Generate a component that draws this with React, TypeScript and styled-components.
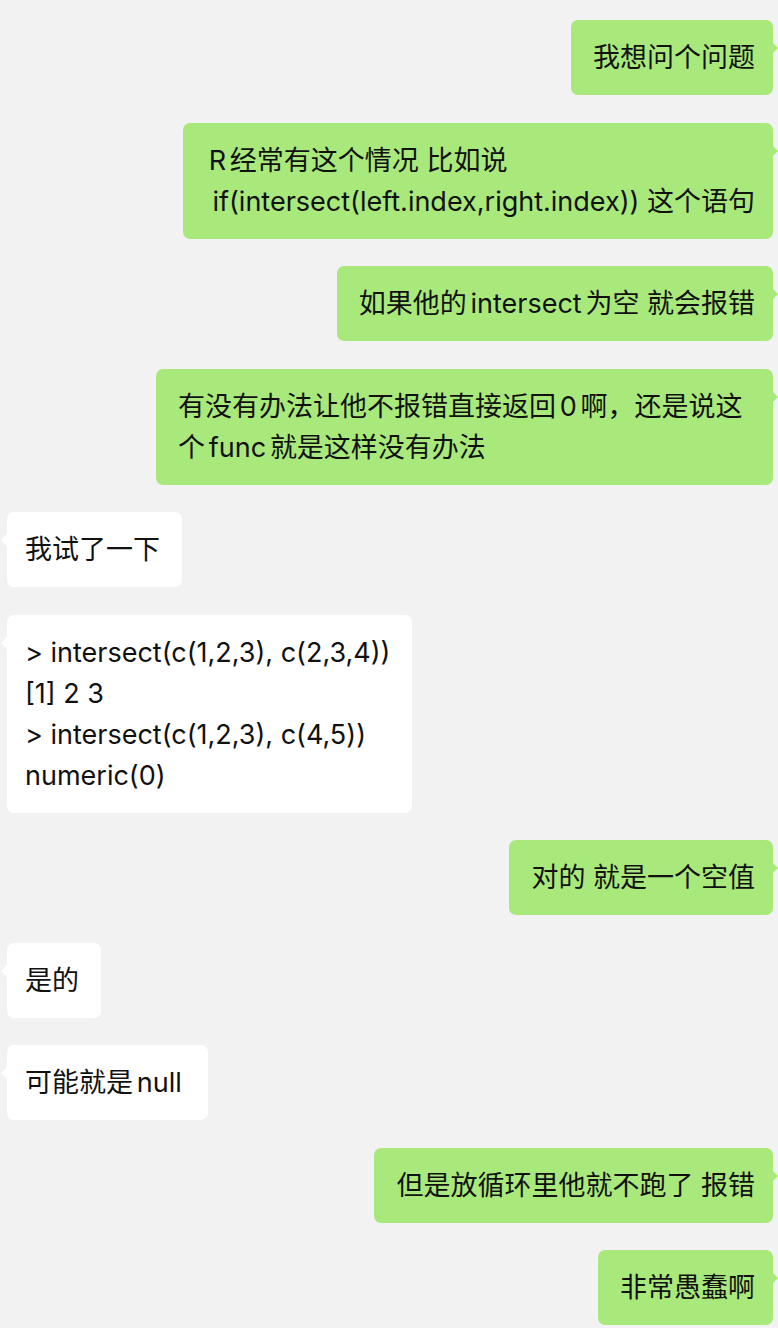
import React from 'react'
import { styled, createGlobalStyle } from 'styled-components'

type Side = 'left' | 'right'

type Message = {
  id: number
  side: Side
  text: string
}

const messages: Message[] = [
  { id: 1, side: 'right', text: '我想问个问题' },
  { id: 2, side: 'right', text: 'R经常有这个情况 比如说\n if(intersect(left.index,right.index)) 这个语句' },
  { id: 3, side: 'right', text: '如果他的intersect为空 就会报错' },
  { id: 4, side: 'right', text: '有没有办法让他不报错直接返回0啊，还是说这个func就是这样没有办法' },
  { id: 5, side: 'left', text: '我试了一下' },
  {
    id: 6,
    side: 'left',
    text: '> intersect(c(1,2,3), c(2,3,4))\n[1] 2 3\n> intersect(c(1,2,3), c(4,5))\nnumeric(0)',
  },
  { id: 7, side: 'right', text: '对的 就是一个空值' },
  { id: 8, side: 'left', text: '是的' },
  { id: 9, side: 'left', text: '可能就是null' },
  { id: 10, side: 'right', text: '但是放循环里他就不跑了 报错' },
  { id: 11, side: 'right', text: '非常愚蠢啊' },
]

const CJK = /([\u3000-\u303f\u4e00-\u9fff\uff00-\uffef]+)/

// macOS puts a little air between Chinese and Latin runs, mimic that
const renderText = (text: string) => {
  if (!CJK.test(text)) return text
  return text.split(CJK).map((part, i) => {
    if (!part) return null
    if (CJK.test(part) || !/\S/.test(part)) return <React.Fragment key={i}>{part}</React.Fragment>
    return (
      <Latin key={i} $left={!/^\s/.test(part)} $right={!/\s$/.test(part)}>
        {part}
      </Latin>
    )
  })
}

const App: React.FC = () => {
  return (
    <>
      <GlobalStyle />
      <Chat>
        {messages.map((m) => (
          <Row key={m.id} $side={m.side}>
            <Bubble $side={m.side}>{renderText(m.text)}</Bubble>
          </Row>
        ))}
      </Chat>
    </>
  )
}

const GlobalStyle = createGlobalStyle`
  html, body {
    margin: 0;
    padding: 0;
    background: #f2f2f2;
  }

  body {
    font-family: Inter, "Noto Sans CJK SC", "Noto Sans", sans-serif;
    -webkit-font-smoothing: antialiased;
  }
`

const Chat = styled.div`
  display: flex;
  flex-direction: column;
  gap: 27.5px;
  padding: 20px 5px 20px 7px;
  box-sizing: border-box;
  width: 778px;
  min-height: 1328px;
`

const Row = styled.div<{ $side: Side }>`
  display: flex;
  justify-content: ${(p) => (p.$side === 'right' ? 'flex-end' : 'flex-start')};
`

const Bubble = styled.div<{ $side: Side }>`
  position: relative;
  max-width: 617px;
  box-sizing: border-box;
  padding: ${(p) => (p.$side === 'right' ? '17px 18px 17px 22px' : '17px 22px 17px 18px')};
  border-radius: 7px;
  background: ${(p) => (p.$side === 'right' ? '#a9e97c' : '#ffffff')};
  color: #111111;
  font-size: 27px;
  line-height: 41px;
  white-space: pre-wrap;
  word-break: break-word;

  &::after {
    content: '';
    position: absolute;
    top: 22px;
    ${(p) => (p.$side === 'right' ? 'right: -5px;' : 'left: -6px;')}
    border-top: 6px solid transparent;
    border-bottom: 6px solid transparent;
    ${(p) =>
      p.$side === 'right'
        ? 'border-left: 6px solid #a9e97c;'
        : 'border-right: 6px solid #ffffff;'}
  }
`

const Latin = styled.span<{ $left: boolean; $right: boolean }>`
  margin-left: ${(p) => (p.$left ? '0.14em' : '0')};
  margin-right: ${(p) => (p.$right ? '0.14em' : '0')};
`

export default App
